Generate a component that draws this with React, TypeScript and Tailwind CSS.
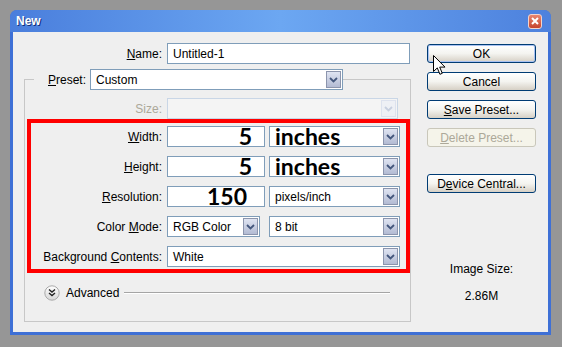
import React from 'react';

const ui = "font-['Liberation_Sans',Arial,sans-serif] text-[12px] text-black";
const big = "font-['Lato','Liberation_Sans',sans-serif] font-bold text-[23px] leading-[19px]";

function DropButton({ disabled }: { disabled?: boolean }) {
  return (
    <div
      className={
        disabled
          ? 'w-[15px] m-[1px] flex items-center justify-center bg-[#eef0f5] border border-[#dde2ee]'
          : 'w-[15px] m-[1px] flex items-center justify-center bg-gradient-to-b from-[#dfe4f2] to-[#b3bbd3] border border-[#8c95ad]'
      }
    >
      <svg width="9" height="6" viewBox="0 0 9 6">
        <path
          d="M1 1l3.5 3.5L8 1"
          stroke={disabled ? '#c7cfdf' : '#44577d'}
          strokeWidth="1.8"
          fill="none"
        />
      </svg>
    </div>
  );
}

function Select({ width, children, disabled }: { width: string; children?: React.ReactNode; disabled?: boolean }) {
  return (
    <div
      className={`${width} h-[21px] flex border ${disabled ? 'border-[#c9d6e6] bg-[#f4f4f4]' : 'border-[#7f9db9] bg-white'}`}
    >
      <div className="flex-1 flex items-center pl-[5px] whitespace-nowrap">{children}</div>
      <DropButton disabled={disabled} />
    </div>
  );
}

function Label({ width, children, disabled }: { width: string; children: React.ReactNode; disabled?: boolean }) {
  return (
    <div className={`${width} text-right ${disabled ? 'text-[#aca899]' : ''}`}>{children}</div>
  );
}

function Button({ children, focused, disabled }: { children: React.ReactNode; focused?: boolean; disabled?: boolean }) {
  if (disabled) {
    return (
      <div className="w-[109px] h-[19px] rounded-[3px] border border-[#c9c7ba] bg-[#f5f4ea] flex items-center justify-center text-[#aca899]">
        {children}
      </div>
    );
  }
  return (
    <div
      className={`w-[109px] h-[19px] rounded-[3px] border border-[#003c74] bg-gradient-to-b from-white via-[#f4f4f0] to-[#d6d0c5] flex items-center justify-center ${focused ? 'shadow-[inset_0_0_0_1px_#a9c2f2]' : ''}`}
    >
      {children}
    </div>
  );
}

export default function App() {
  return (
    <div className={`w-[562px] h-[347px] bg-[#969696] pt-[10px] pl-[10px] ${ui}`}>
      <div className="w-[541px] h-[325px] rounded-t-[7px] bg-[#3e70d6] flex flex-col px-[3px] pb-[3px]">
        {/* title bar */}
        <div className="h-[22px] -mx-[3px] rounded-t-[7px] bg-gradient-to-r from-[#4a7edc] via-[#6ca7f2] to-[#4d81dd] flex items-center justify-between pl-[6px] pr-[9px]">
          <span className="text-white font-bold text-[12px] [text-shadow:1px_1px_0_#10307a]">New</span>
          <div className="w-[14px] h-[15px] rounded-[3px] border border-[#f3d3cb] bg-gradient-to-b from-[#e8866f] to-[#c5432c] flex items-center justify-center">
            <svg width="8" height="8" viewBox="0 0 8 8">
              <path d="M1 1l6 6M7 1l-6 6" stroke="white" strokeWidth="2" />
            </svg>
          </div>
        </div>

        {/* content */}
        <div className="flex-1 bg-[#efefef] flex relative">
          {/* left column */}
          <div className="w-[398px] pt-[11px] flex flex-col">
            <div className="flex items-center gap-[5px]">
              <Label width="w-[149px]">
                <span className="underline">N</span>ame:
              </Label>
              <div className="w-[243px] h-[21px] border border-[#7f9db9] bg-white flex items-center pl-[5px]">
                Untitled-1
              </div>
            </div>

            <fieldset className="mt-[5px] ml-[11px] w-[385px] border border-[#c7c7c7] pl-[2px] pb-[19px]">
              <legend className="ml-[7px] pl-[14px]">
                <div className="flex items-center gap-[4px]">
                  <span>
                    <span className="underline">P</span>reset:
                  </span>
                  <Select width="w-[253px]">Custom</Select>
                </div>
              </legend>

              <div className="mt-[8px] flex items-center gap-[5px]">
                <Label width="w-[135px]" disabled>
                  Size:
                </Label>
                <Select width="w-[231px]" disabled />
              </div>

              <div className="w-[383px] border-[4px] border-[#ff0000] pt-[3px] pb-[2px] flex flex-col gap-[9px]">
                <div className="flex items-center">
                  <Label width="w-[131px]">
                    <span className="underline">W</span>idth:
                  </Label>
                  <div className="ml-[5px] w-[98px] h-[21px] border border-[#7f9db9] bg-white flex items-center justify-end pr-[12px]">
                    <span className={big}>5</span>
                  </div>
                  <div className="ml-[4px]">
                    <Select width="w-[131px]">
                      <span className={big}>inches</span>
                    </Select>
                  </div>
                </div>
                <div className="flex items-center">
                  <Label width="w-[131px]">
                    <span className="underline">H</span>eight:
                  </Label>
                  <div className="ml-[5px] w-[98px] h-[21px] border border-[#7f9db9] bg-white flex items-center justify-end pr-[12px]">
                    <span className={big}>5</span>
                  </div>
                  <div className="ml-[4px]">
                    <Select width="w-[131px]">
                      <span className={big}>inches</span>
                    </Select>
                  </div>
                </div>
                <div className="flex items-center">
                  <Label width="w-[131px]">
                    <span className="underline">R</span>esolution:
                  </Label>
                  <div className="ml-[5px] w-[98px] h-[21px] border border-[#7f9db9] bg-white flex items-center justify-end pr-[17px]">
                    <span className={big}>150</span>
                  </div>
                  <div className="ml-[4px]">
                    <Select width="w-[131px]">pixels/inch</Select>
                  </div>
                </div>
                <div className="flex items-center">
                  <Label width="w-[131px]">
                    Color <span className="underline">M</span>ode:
                  </Label>
                  <div className="ml-[5px]">
                    <Select width="w-[93px]">RGB Color</Select>
                  </div>
                  <div className="ml-[9px]">
                    <Select width="w-[131px]">8 bit</Select>
                  </div>
                </div>
                <div className="flex items-center">
                  <Label width="w-[131px]">
                    Background <span className="underline">C</span>ontents:
                  </Label>
                  <div className="ml-[5px]">
                    <Select width="w-[233px]">White</Select>
                  </div>
                </div>
              </div>

              <div className="mt-[11px] ml-[17px] flex items-center">
                <svg width="16" height="16" viewBox="0 0 16 16">
                  <defs>
                    <linearGradient id="adv" x1="0" y1="0" x2="0" y2="1">
                      <stop offset="0" stopColor="#ffffff" />
                      <stop offset="1" stopColor="#d6d6d6" />
                    </linearGradient>
                  </defs>
                  <circle cx="8" cy="8" r="7.2" fill="url(#adv)" stroke="#a9a9a9" />
                  <path d="M5 4.5l3 2.5 3-2.5M5 8l3 2.5 3-2.5" stroke="#222" strokeWidth="1.4" fill="none" />
                </svg>
                <span className="ml-[6px]">Advanced</span>
                <div className="ml-[5px] w-[266px] h-[2px] border-t border-[#a5a5a5] border-b border-b-white" />
              </div>
            </fieldset>
          </div>

          {/* right column */}
          <div className="pl-[16px] pt-[12px] flex flex-col">
            <div className="flex flex-col gap-[9px]">
              <Button focused>OK</Button>
              <Button>Cancel</Button>
              <Button>
                <span>
                  <span className="underline">S</span>ave Preset...
                </span>
              </Button>
              <Button disabled>
                <span>
                  <span className="underline">D</span>elete Preset...
                </span>
              </Button>
            </div>
            <div className="mt-[27px]">
              <Button>
                <span>
                  D<span className="underline">e</span>vice Central...
                </span>
              </Button>
            </div>
            <div className="w-[109px] mt-[67px] text-center">Image Size:</div>
            <div className="w-[109px] mt-[9px] text-center">2.86M</div>
          </div>

          {/* mouse pointer */}
          <svg className="absolute left-[420px] top-[23px]" width="13" height="21" viewBox="0 0 13 21">
            <path
              d="M0.5 0.5v16l3.8-3.6 2.6 6.4 2.4-1-2.6-6.2h5.3z"
              fill="white"
              stroke="black"
              strokeWidth="1"
              strokeLinejoin="round"
            />
          </svg>
        </div>
      </div>
    </div>
  );
}
